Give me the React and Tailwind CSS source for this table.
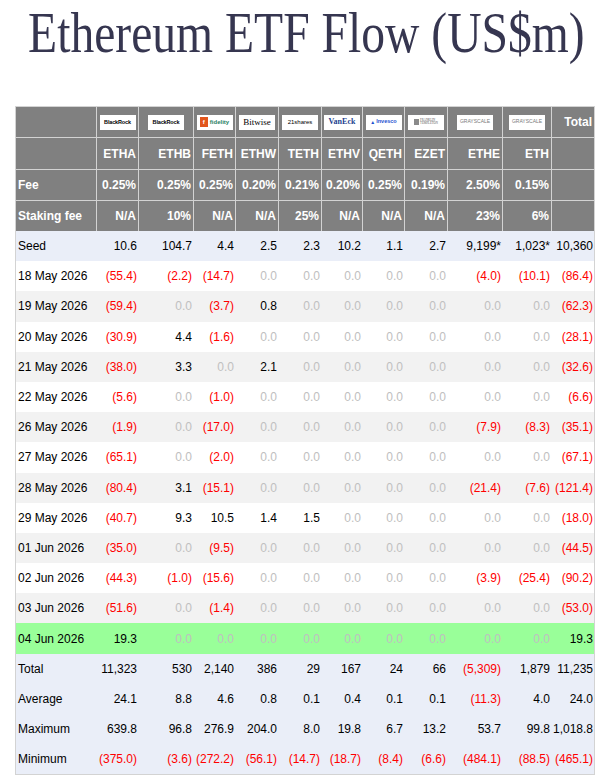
import React from "react";

const grid =
  "grid grid-cols-[80px_41px_54px_41px_42px_42px_40px_41px_42px_54px_48px_42px] gap-x-px";

const tickers = ["ETHA", "ETHB", "FETH", "ETHW", "TETH", "ETHV", "QETH", "EZET", "ETHE", "ETH"];
const fees = ["0.25%", "0.25%", "0.25%", "0.20%", "0.21%", "0.20%", "0.25%", "0.19%", "2.50%", "0.15%"];
const staking = ["N/A", "10%", "N/A", "N/A", "25%", "N/A", "N/A", "N/A", "23%", "6%"];

const z = "0.0";
const rows = [
  { label: "Seed", bg: "bg-[#eaeef8]", v: ["10.6", "104.7", "4.4", "2.5", "2.3", "10.2", "1.1", "2.7", "9,199*", "1,023*", "10,360"] },
  { label: "18 May 2026", bg: "bg-white", v: ["(55.4)", "(2.2)", "(14.7)", z, z, z, z, z, "(4.0)", "(10.1)", "(86.4)"] },
  { label: "19 May 2026", bg: "bg-[#f2f2f2]", v: ["(59.4)", z, "(3.7)", "0.8", z, z, z, z, z, z, "(62.3)"] },
  { label: "20 May 2026", bg: "bg-white", v: ["(30.9)", "4.4", "(1.6)", z, z, z, z, z, z, z, "(28.1)"] },
  { label: "21 May 2026", bg: "bg-[#f2f2f2]", v: ["(38.0)", "3.3", z, "2.1", z, z, z, z, z, z, "(32.6)"] },
  { label: "22 May 2026", bg: "bg-white", v: ["(5.6)", z, "(1.0)", z, z, z, z, z, z, z, "(6.6)"] },
  { label: "26 May 2026", bg: "bg-[#f2f2f2]", v: ["(1.9)", z, "(17.0)", z, z, z, z, z, "(7.9)", "(8.3)", "(35.1)"] },
  { label: "27 May 2026", bg: "bg-white", v: ["(65.1)", z, "(2.0)", z, z, z, z, z, z, z, "(67.1)"] },
  { label: "28 May 2026", bg: "bg-[#f2f2f2]", v: ["(80.4)", "3.1", "(15.1)", z, z, z, z, z, "(21.4)", "(7.6)", "(121.4)"] },
  { label: "29 May 2026", bg: "bg-white", v: ["(40.7)", "9.3", "10.5", "1.4", "1.5", z, z, z, z, z, "(18.0)"] },
  { label: "01 Jun 2026", bg: "bg-[#f2f2f2]", v: ["(35.0)", z, "(9.5)", z, z, z, z, z, z, z, "(44.5)"] },
  { label: "02 Jun 2026", bg: "bg-white", v: ["(44.3)", "(1.0)", "(15.6)", z, z, z, z, z, "(3.9)", "(25.4)", "(90.2)"] },
  { label: "03 Jun 2026", bg: "bg-[#f2f2f2]", v: ["(51.6)", z, "(1.4)", z, z, z, z, z, z, z, "(53.0)"] },
  { label: "04 Jun 2026", bg: "bg-[#99ff99]", v: ["19.3", z, z, z, z, z, z, z, z, z, "19.3"] },
  { label: "Total", bg: "bg-[#eaeef8]", v: ["11,323", "530", "2,140", "386", "29", "167", "24", "66", "(5,309)", "1,879", "11,235"] },
  { label: "Average", bg: "bg-[#eaeef8]", v: ["24.1", "8.8", "4.6", "0.8", "0.1", "0.4", "0.1", "0.1", "(11.3)", "4.0", "24.0"] },
  { label: "Maximum", bg: "bg-[#eaeef8]", v: ["639.8", "96.8", "276.9", "204.0", "8.0", "19.8", "6.7", "13.2", "53.7", "99.8", "1,018.8"] },
  { label: "Minimum", bg: "bg-[#eaeef8]", v: ["(375.0)", "(3.6)", "(272.2)", "(56.1)", "(14.7)", "(18.7)", "(8.4)", "(6.6)", "(484.1)", "(88.5)", "(465.1)"] },
];

function colour(v) {
  if (v.startsWith("(")) return "text-[#ff0000]";
  if (v === "0.0") return "text-[#c0c0c0]";
  return "text-black";
}

function Logo({ children }) {
  return (
    <div className="mx-auto flex h-[15px] w-[36px] items-center justify-center overflow-hidden bg-white">
      {children}
    </div>
  );
}

const logos = [
  <Logo key="br1"><span className="text-[5.5px] font-bold tracking-tight text-black">BlackRock</span></Logo>,
  <Logo key="br2"><span className="text-[5.5px] font-bold tracking-tight text-black">BlackRock</span></Logo>,
  <Logo key="fid">
    <div className="flex items-center gap-[2px]">
      <span className="flex h-[10px] w-[8px] items-center justify-center bg-[#e2561d] text-[6px] font-bold leading-none text-white">f</span>
      <span className="text-[6px] font-bold leading-none text-[#2a7f62]">fidelity</span>
    </div>
  </Logo>,
  <Logo key="bit"><span className="font-['Liberation_Serif',serif] text-[9px] leading-none text-black">Bitwise</span></Logo>,
  <Logo key="21"><span className="text-[6px] text-black">21shares</span></Logo>,
  <Logo key="ve"><span className="font-['Liberation_Serif',serif] text-[8px] font-bold leading-none text-[#1c3f8f]">VanEck</span></Logo>,
  <Logo key="inv">
    <div className="flex items-center gap-[1px]">
      <span className="text-[5px] leading-none text-[#1d4fd0]">▲</span>
      <span className="text-[5.5px] font-bold leading-none text-[#1d4fd0]">Invesco</span>
    </div>
  </Logo>,
  <Logo key="ft">
    <div className="flex items-center gap-[1px]">
      <span className="h-[6px] w-[5px] bg-[#8a8a8a]" />
      <div className="flex flex-col font-['Liberation_Serif',serif] text-[3px] leading-[3.5px] text-[#555]">
        <span>FRANKLIN</span>
        <span>TEMPLETON</span>
      </div>
    </div>
  </Logo>,
  <Logo key="gs1"><span className="text-[5px] text-[#7a7a7a]">GRAYSCALE</span></Logo>,
  <Logo key="gs2"><span className="text-[5px] text-[#7a7a7a]">GRAYSCALE</span></Logo>,
];

function HeadCell({ children, left, h }) {
  return (
    <div
      className={`flex items-center bg-[#808080] font-bold text-white ${h} ${
        left ? "justify-start pl-[2px]" : "justify-end pr-[2px]"
      }`}
    >
      {children}
    </div>
  );
}

export default function App() {
  return (
    <div className="w-[612px] overflow-hidden bg-white font-['Liberation_Sans',Arial,sans-serif] text-[12px]">
      <div className="flex justify-center pt-[5px]">
        <h1 className="shrink-0 scale-x-[0.85] whitespace-nowrap font-['Liberation_Serif','Times_New_Roman',serif] text-[56px] font-normal leading-[57px] text-[#363650]">
          Ethereum ETF Flow (US$m)
        </h1>
      </div>

      <div className="ml-[15px] mt-[44px] w-[580px] border border-[#d3d3d3]">
        <div className={`${grid} gap-y-px bg-[#d3d3d3]`}>
          <HeadCell left h="h-[30px]" />
          {logos.map((l, i) => (
            <div key={i} className="flex h-[30px] items-center bg-[#808080]">
              {l}
            </div>
          ))}
          <HeadCell h="h-[30px]">Total</HeadCell>

          <HeadCell left h="h-[31px]" />
          {tickers.map((t) => (
            <HeadCell key={t} h="h-[31px]">{t}</HeadCell>
          ))}
          <HeadCell h="h-[31px]" />

          <HeadCell left h="h-[30px]">Fee</HeadCell>
          {fees.map((f, i) => (
            <HeadCell key={i} h="h-[30px]">{f}</HeadCell>
          ))}
          <HeadCell h="h-[30px]" />

          <HeadCell left h="h-[30px]">Staking fee</HeadCell>
          {staking.map((s, i) => (
            <HeadCell key={i} h="h-[30px]">{s}</HeadCell>
          ))}
          <HeadCell h="h-[30px]" />
        </div>

        {rows.map((r) => (
          <div key={r.label} className={`${grid} h-[30.2px] items-center ${r.bg}`}>
            <div className="pl-[2px] text-black">{r.label}</div>
            {r.v.map((v, i) => (
              <div key={i} className={`whitespace-nowrap pr-px text-right ${colour(v)}`}>
                {v}
              </div>
            ))}
          </div>
        ))}
      </div>
    </div>
  );
}
